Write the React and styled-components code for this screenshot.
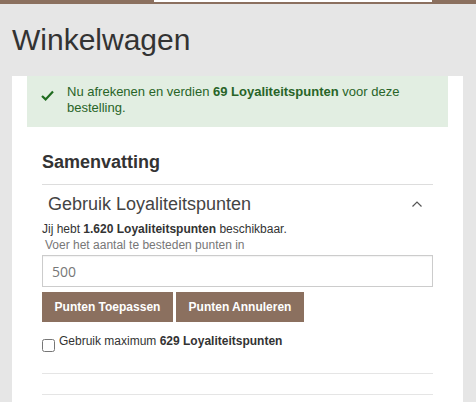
import React from 'react'
import styled, { createGlobalStyle } from 'styled-components'

const Global = createGlobalStyle`
  html, body { margin: 0; padding: 0; }
  body {
    background: #e6e6e6;
    font-family: "Liberation Sans", Arial, sans-serif;
    color: #333;
    overflow: hidden;
  }
`

function Check() {
  return (
    <svg width="13" height="11" viewBox="0 0 13 11">
      <path d="M1 6 L4.6 9.4 L12 1.4" fill="none" stroke="#1f6b1f" strokeWidth="2.2" />
    </svg>
  )
}

function ChevronUp() {
  return (
    <svg width="12" height="8" viewBox="0 0 12 8">
      <path d="M1.5 6.5 L6 2 L10.5 6.5" fill="none" stroke="#555" strokeWidth="1.2" />
    </svg>
  )
}

export default function App() {
  return (
    <Page>
      <Global />
      <TopBar>
        <Search />
      </TopBar>
      <Title>Winkelwagen</Title>
      <Card>
        <Alert>
          <AlertIcon><Check /></AlertIcon>
          <AlertText>
            Nu afrekenen en verdien <b>69 Loyaliteitspunten</b> voor deze bestelling.
          </AlertText>
        </Alert>
        <Body>
          <Heading>Samenvatting</Heading>
          <Divider />
          <AccordionHead>
            <span>Gebruik Loyaliteitspunten</span>
            <ChevronUp />
          </AccordionHead>
          <Info>Jij hebt <b>1.620 Loyaliteitspunten</b> beschikbaar.</Info>
          <Label>Voer het aantal te besteden punten in</Label>
          <Input defaultValue="500" />
          <Buttons>
            <Button $w={131}>Punten Toepassen</Button>
            <Button $w={128}>Punten Annuleren</Button>
          </Buttons>
          <CheckRow>
            <Box type="checkbox" />
            <span>Gebruik maximum <b>629 Loyaliteitspunten</b></span>
          </CheckRow>
          <Line $mt={21} />
          <Line $mt={20} />
        </Body>
      </Card>
    </Page>
  )
}

const Page = styled.div`
  width: 476px;
  height: 402px;
  display: flex;
  flex-direction: column;
`
const TopBar = styled.div`
  height: 4px;
  background: #8b705f;
  padding-left: 154px;
  flex-shrink: 0;
`
const Search = styled.div`
  width: 278px;
  height: 2px;
  background: #fff;
`
const Title = styled.h1`
  margin: 17px 0 0 12px;
  font-size: 30px;
  font-weight: 400;
  line-height: 38px;
  color: #333;
  height: 55px;
`
const Card = styled.div`
  margin: 0 13px 0 12px;
  background: #fff;
  flex: 1;
  padding: 0 15px;
`
const Alert = styled.div`
  display: flex;
  background: #e2eee2;
  padding: 8px 20px 8px 14px;
  height: 35px;
  font-size: 13px;
  line-height: 16px;
  color: #286428;
  gap: 13px;
`
const AlertIcon = styled.div`
  padding-top: 5px;
`
const AlertText = styled.div`
  b { font-weight: 700; }
`
const Body = styled.div`
  padding: 24px 15px 0;
`
const Heading = styled.div`
  font-size: 18px;
  font-weight: 700;
  color: #333;
  line-height: 22px;
  margin-bottom: 11px;
`
const Divider = styled.div`
  height: 1px;
  background: #ddd;
`
const AccordionHead = styled.div`
  display: flex;
  align-items: center;
  justify-content: space-between;
  padding: 6px 10px 0 6px;
  height: 26px;
  font-size: 18px;
  color: #444;
`
const Info = styled.div`
  margin-top: 4px;
  font-size: 12px;
  line-height: 16px;
  color: #333;
`
const Label = styled.div`
  font-size: 12px;
  line-height: 16px;
  color: #777;
  padding-left: 3px;
`
const Input = styled.input`
  display: block;
  box-sizing: border-box;
  width: 100%;
  height: 32px;
  margin-top: 2px;
  border: 1px solid #ccc;
  box-shadow: inset 0 1px 1px rgba(0,0,0,0.05);
  padding: 0 9px;
  font-family: "Open Sans", sans-serif;
  font-size: 14px;
  color: #777;
  outline: none;
`
const Buttons = styled.div`
  display: flex;
  gap: 3px;
  margin-top: 5px;
`
const Button = styled.button`
  width: ${p => p.$w}px;
  height: 30px;
  border: none;
  background: #8b705f;
  color: #fff;
  font-family: "Liberation Sans", Arial, sans-serif;
  font-size: 12px;
  font-weight: 700;
  padding: 0;
`
const CheckRow = styled.label`
  display: flex;
  align-items: flex-start;
  gap: 4px;
  margin-top: 12px;
  font-size: 12px;
  color: #333;
  b { font-weight: 700; }
`
const Box = styled.input`
  margin: 5px 0 0 0;
  width: 13px;
  height: 13px;
`
const Line = styled.div`
  height: 1px;
  background: #e5e5e5;
  margin-top: ${p => p.$mt}px;
`
